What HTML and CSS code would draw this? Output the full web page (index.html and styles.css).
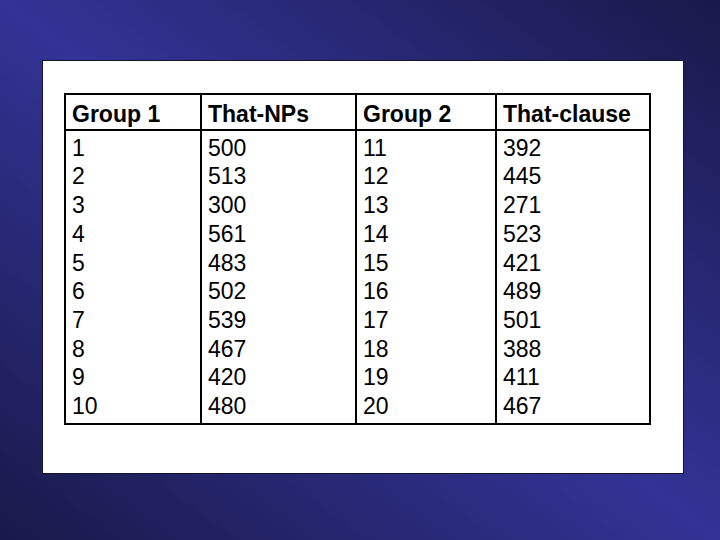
FILE: index.html
```html
<!DOCTYPE html>
<html>
<head>
<meta charset="utf-8">
<link rel="stylesheet" href="styles.css">
</head>
<body>
<div class="slide">
  <div class="card">
    <table class="data">
      <colgroup>
        <col class="c1"><col class="c2"><col class="c3"><col class="c4">
      </colgroup>
      <thead>
        <tr><th>Group 1</th><th>That-NPs</th><th>Group 2</th><th>That-clause</th></tr>
      </thead>
      <tbody>
        <tr class="first"><td>1</td><td>500</td><td>11</td><td>392</td></tr>
        <tr><td>2</td><td>513</td><td>12</td><td>445</td></tr>
        <tr><td>3</td><td>300</td><td>13</td><td>271</td></tr>
        <tr><td>4</td><td>561</td><td>14</td><td>523</td></tr>
        <tr><td>5</td><td>483</td><td>15</td><td>421</td></tr>
        <tr><td>6</td><td>502</td><td>16</td><td>489</td></tr>
        <tr><td>7</td><td>539</td><td>17</td><td>501</td></tr>
        <tr><td>8</td><td>467</td><td>18</td><td>388</td></tr>
        <tr><td>9</td><td>420</td><td>19</td><td>411</td></tr>
        <tr class="last"><td>10</td><td>480</td><td>20</td><td>467</td></tr>
      </tbody>
    </table>
  </div>
</div>
</body>
</html>
```
FILE: styles.css
```css
html, body {
  margin: 0;
  padding: 0;
}
body {
  width: 720px;
  height: 540px;
  overflow: hidden;
  font-family: "Liberation Sans", Arial, sans-serif;
}
.slide {
  box-sizing: border-box;
  width: 720px;
  height: 540px;
  padding: 60px 0 0 42px;
  background: linear-gradient(to top right, #19194a 0%, #333396 50%, #19194a 100%);
}
.card {
  box-sizing: border-box;
  width: 642px;
  height: 414px;
  background: #ffffff;
  border: 1px solid #141428;
  padding: 32px 0 0 21px;
}
.data {
  border-collapse: collapse;
  table-layout: fixed;
  width: 585px;
  color: #000;
  font-size: 23px;
  line-height: 28.7px;
  border: 2px solid #000;
}
.c1 { width: 136px; }
.c2 { width: 155px; }
.c3 { width: 140px; }
.c4 { width: 154px; }
.data th, .data td {
  text-align: left;
  padding: 0 0 0 6px;
  border-left: 2px solid #000;
  border-right: 2px solid #000;
  white-space: nowrap;
}
.data th {
  font-weight: bold;
  padding-top: 5px;
  padding-bottom: 0;
  border-bottom: 2px solid #000;
}
.data tr.first td {
  padding-top: 3px;
}
.data tr.last td {
  padding-bottom: 2px;
}
```
